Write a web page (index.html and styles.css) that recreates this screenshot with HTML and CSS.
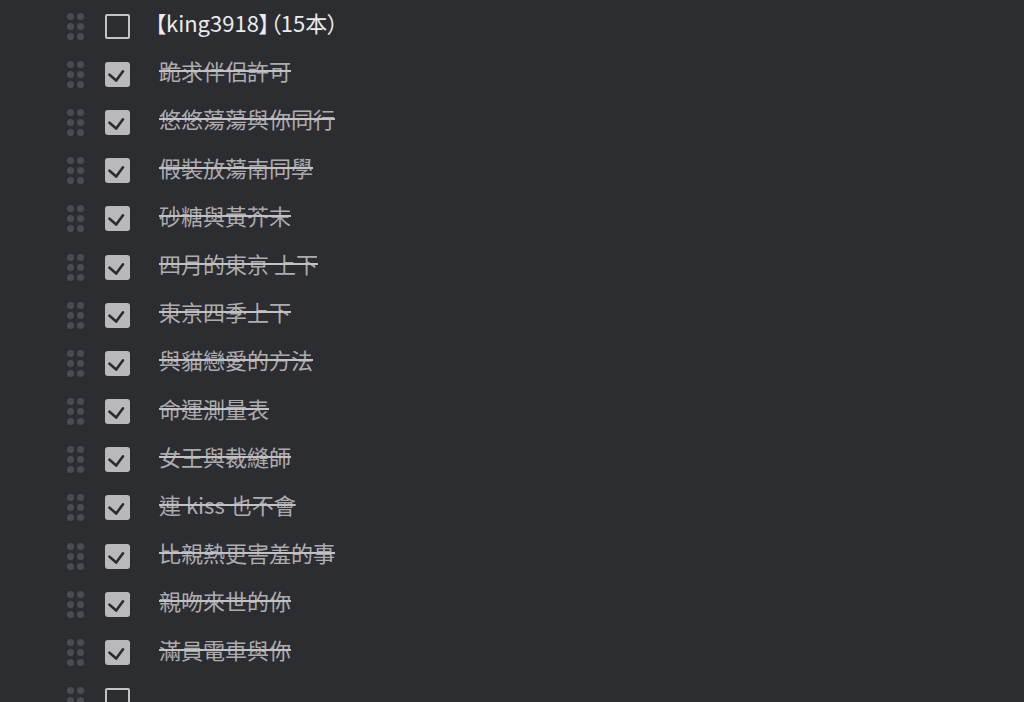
FILE: index.html
```html
<!DOCTYPE html>
<html lang="zh-Hant">
<head>
    <meta charset="UTF-8">
    <meta name="viewport" content="width=device-width, initial-scale=1.0">
    <title>清單</title>
    <link rel="stylesheet" href="styles.css">
</head>
<body>

    <ul class="todo-list">
        <li class="todo-item">
            <span class="handle"><i></i><i></i><i></i><i></i><i></i><i></i></span>
            <span class="box"></span>
            <span class="label title">【king3918】（15本）</span>
        </li>
        <li class="todo-item done">
            <span class="handle"><i></i><i></i><i></i><i></i><i></i><i></i></span>
            <span class="box"><svg viewBox="0 0 25 25"><path d="M4.5 12.7 L11.2 18.6 L18 9.3"/></svg></span>
            <span class="label">跪求伴侶許可</span>
        </li>
        <li class="todo-item done">
            <span class="handle"><i></i><i></i><i></i><i></i><i></i><i></i></span>
            <span class="box"><svg viewBox="0 0 25 25"><path d="M4.5 12.7 L11.2 18.6 L18 9.3"/></svg></span>
            <span class="label">悠悠蕩蕩與你同行</span>
        </li>
        <li class="todo-item done">
            <span class="handle"><i></i><i></i><i></i><i></i><i></i><i></i></span>
            <span class="box"><svg viewBox="0 0 25 25"><path d="M4.5 12.7 L11.2 18.6 L18 9.3"/></svg></span>
            <span class="label">假裝放蕩南同學</span>
        </li>
        <li class="todo-item done">
            <span class="handle"><i></i><i></i><i></i><i></i><i></i><i></i></span>
            <span class="box"><svg viewBox="0 0 25 25"><path d="M4.5 12.7 L11.2 18.6 L18 9.3"/></svg></span>
            <span class="label">砂糖與黃芥末</span>
        </li>
        <li class="todo-item done">
            <span class="handle"><i></i><i></i><i></i><i></i><i></i><i></i></span>
            <span class="box"><svg viewBox="0 0 25 25"><path d="M4.5 12.7 L11.2 18.6 L18 9.3"/></svg></span>
            <span class="label">四月的東京 上下</span>
        </li>
        <li class="todo-item done">
            <span class="handle"><i></i><i></i><i></i><i></i><i></i><i></i></span>
            <span class="box"><svg viewBox="0 0 25 25"><path d="M4.5 12.7 L11.2 18.6 L18 9.3"/></svg></span>
            <span class="label">東京四季上下</span>
        </li>
        <li class="todo-item done">
            <span class="handle"><i></i><i></i><i></i><i></i><i></i><i></i></span>
            <span class="box"><svg viewBox="0 0 25 25"><path d="M4.5 12.7 L11.2 18.6 L18 9.3"/></svg></span>
            <span class="label">與貓戀愛的方法</span>
        </li>
        <li class="todo-item done">
            <span class="handle"><i></i><i></i><i></i><i></i><i></i><i></i></span>
            <span class="box"><svg viewBox="0 0 25 25"><path d="M4.5 12.7 L11.2 18.6 L18 9.3"/></svg></span>
            <span class="label">命運測量表</span>
        </li>
        <li class="todo-item done">
            <span class="handle"><i></i><i></i><i></i><i></i><i></i><i></i></span>
            <span class="box"><svg viewBox="0 0 25 25"><path d="M4.5 12.7 L11.2 18.6 L18 9.3"/></svg></span>
            <span class="label">女王與裁縫師</span>
        </li>
        <li class="todo-item done">
            <span class="handle"><i></i><i></i><i></i><i></i><i></i><i></i></span>
            <span class="box"><svg viewBox="0 0 25 25"><path d="M4.5 12.7 L11.2 18.6 L18 9.3"/></svg></span>
            <span class="label">連 kiss 也不會</span>
        </li>
        <li class="todo-item done">
            <span class="handle"><i></i><i></i><i></i><i></i><i></i><i></i></span>
            <span class="box"><svg viewBox="0 0 25 25"><path d="M4.5 12.7 L11.2 18.6 L18 9.3"/></svg></span>
            <span class="label">比親熱更害羞的事</span>
        </li>
        <li class="todo-item done">
            <span class="handle"><i></i><i></i><i></i><i></i><i></i><i></i></span>
            <span class="box"><svg viewBox="0 0 25 25"><path d="M4.5 12.7 L11.2 18.6 L18 9.3"/></svg></span>
            <span class="label">親吻來世的你</span>
        </li>
        <li class="todo-item done">
            <span class="handle"><i></i><i></i><i></i><i></i><i></i><i></i></span>
            <span class="box"><svg viewBox="0 0 25 25"><path d="M4.5 12.7 L11.2 18.6 L18 9.3"/></svg></span>
            <span class="label">滿員電車與你</span>
        </li>
        <li class="todo-item">
            <span class="handle"><i></i><i></i><i></i><i></i><i></i><i></i></span>
            <span class="box"></span>
            <span class="label"></span>
        </li>
    </ul>

</body>
</html>
```

FILE: styles.css
```css
html, body {
    height: 100%;
}
body {
    margin: 0;
    background-color: #2c2d31;
    font-family: "Noto Sans CJK TC", "Noto Sans", sans-serif;
    overflow: hidden;
}
.todo-list {
    list-style: none;
    margin: 0;
    padding: 2px 0 0 67px;
}
.todo-item {
    display: flex;
    align-items: center;
    height: 48.2px;
}
.handle {
    display: grid;
    grid-template-columns: 7px 7px;
    grid-auto-rows: 7px;
    gap: 3px;
    width: 17px;
    margin-right: 21px;
}
.handle i {
    display: block;
    border-radius: 50%;
    background-color: #4b4c51;
}
.box {
    box-sizing: border-box;
    width: 25px;
    height: 25px;
    border: 2.5px solid #c4c4c7;
    border-radius: 2px;
    margin-right: 29px;
}
.done .box {
    border: none;
    background-color: #b9b9bc;
    border-radius: 3px;
}
.box svg {
    display: block;
    width: 25px;
    height: 25px;
}
.box path {
    fill: none;
    stroke: #2a2b2f;
    stroke-width: 2.6;
    stroke-linecap: round;
    stroke-linejoin: round;
}
.label {
    font-size: 22px;
    line-height: 1;
    color: #ebebeb;
    white-space: nowrap;
    padding-bottom: 8px;
}
.title {
    font-feature-settings: "palt";
    margin-left: -4px;
}
.done .label {
    color: #acacaf;
    text-decoration: line-through;
    text-decoration-color: #c2c2c4;
    text-decoration-thickness: 1.5px;
}
```
